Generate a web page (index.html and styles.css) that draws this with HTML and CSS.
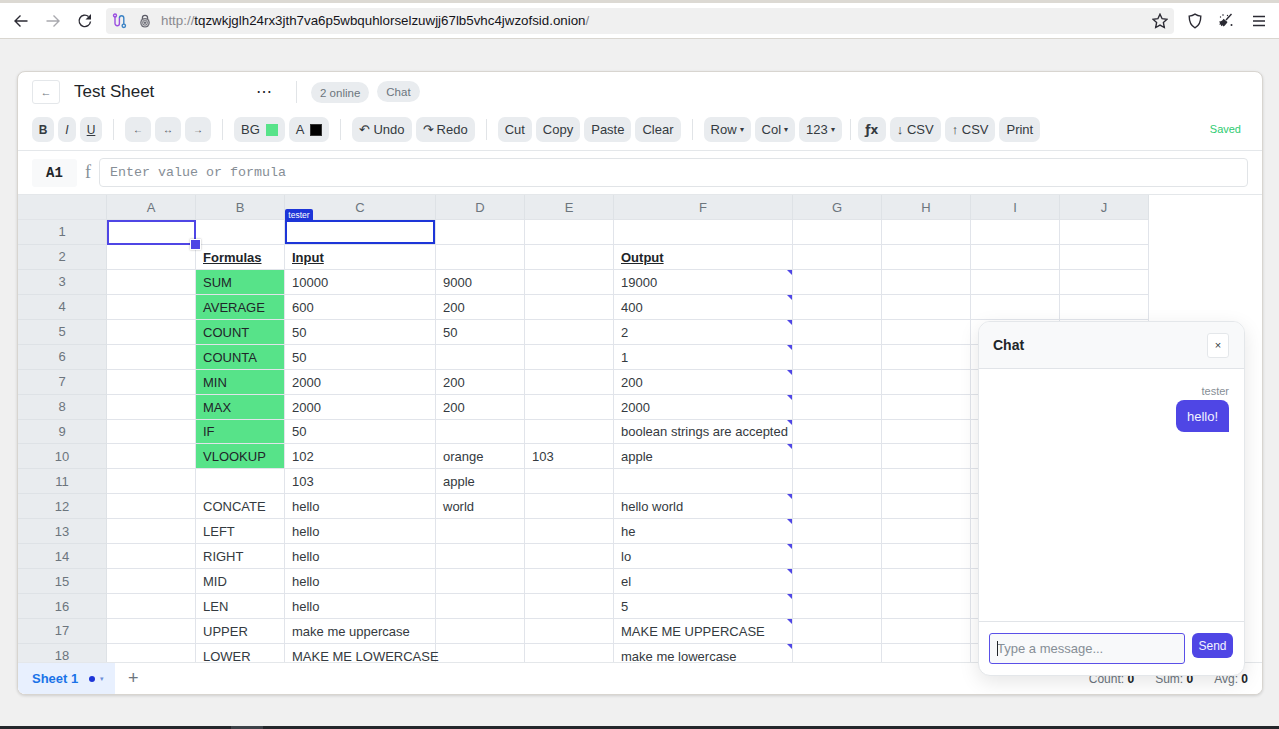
FILE: index.html
```html
<!DOCTYPE html>
<html lang="en">
<head>
<meta charset="utf-8">
<title>Test Sheet</title>
<link rel="stylesheet" href="styles.css">
</head>
<body>
<header class="browser">
  <svg class="bi bi-back" viewBox="0 0 16 16"><path d="M14.5 8H2M7.5 2.5 2 8l5.5 5.5"/></svg>
  <svg class="bi bi-fwd" viewBox="0 0 16 16"><path d="M1.500 8H14M8.500 2.500 14 8l-5.500 5.500"/></svg>
  <svg class="bi bi-reload" viewBox="0 0 16 16"><path d="M13.500 8.500A5.700 5.700 0 1 1 11.500 3.500"/><path class="fill" d="M14 1v5.500H8.500z"/></svg>
  <div class="urlbar">
    <svg class="ui-onion" viewBox="0 0 16 16"><path class="p1" d="M3 3v7.500a2.200 2.200 0 0 0 4.400 0V5"/><path class="p2" d="M7.400 5a2.200 2.200 0 0 1 4.400 0v6"/><circle class="p1" cx="3" cy="2.500" r="1.500"/><circle class="p2" cx="11.800" cy="12.800" r="1.700"/></svg>
    <svg class="ui-lock" viewBox="0 0 16 16"><path class="shackle" d="M5 6V4.500a3 3 0 0 1 6 0V6"/><circle class="body" cx="8" cy="10" r="5.500"/><circle class="ring" cx="8" cy="10" r="3.700"/><circle class="ring" cx="8" cy="10" r="1.900"/></svg>
    <div class="url"><span class="dim">http://</span>tqzwkjglh24rx3jth7va6p5wbquhlorselzuwjj67lb5vhc4jwzofsid.onion<span class="dim">/</span></div>
    <svg class="bi bi-star" viewBox="0 0 16 16"><path d="M8 1.200 10.100 5.700 15 6.300 11.400 9.600 12.300 14.500 8 12.100 3.700 14.500 4.600 9.600 1 6.300 5.900 5.700z"/></svg>
  </div>
  <svg class="bi bi-shield" viewBox="0 0 16 16"><path d="M8 1.200c2 1.300 3.700 1.800 5.800 1.900 0 6-1.500 9.700-5.800 11.700C3.700 12.800 2.200 9.100 2.200 3.100 4.300 3 6 2.500 8 1.200z"/></svg>
  <svg class="bi bi-broom" viewBox="0 0 16 16"><path class="fill" d="M1 8.500c2 .2 3.500-1 4.500-2.800L9.500 9c-1 1.500-2 3.300-4 4.500l-1-1.300-1.200 1-.6-1.700-1.400.3.700-1.800L1 8.500z"/><path d="M8 7 13.500 1"/><circle class="fill" cx="5" cy="2" r=".8"/><circle class="fill" cx="2.500" cy="4" r=".7"/><circle class="fill" cx="13.500" cy="12" r="1"/><circle class="fill" cx="9.500" cy="2.500" r=".7"/></svg>
  <svg class="bi bi-menu" viewBox="0 0 16 16"><path d="M2 3.500h12M2 8h12M2 12.500h12"/></svg>
</header>

<main class="page">
  <section class="card">
    <div class="titlebar">
      <button class="btn-back">←</button>
      <h1 class="doc-title">Test Sheet</h1>
      <span class="doc-more">⋯</span>
      <span class="vsep title-sep"></span>
      <span class="pill pill-online">2 online</span>
      <span class="pill pill-chat">Chat</span>
    </div>
    <div class="toolbar">
      <button class="tb tb-b">B</button><button class="tb tb-i">I</button><button class="tb tb-u">U</button>
      <span class="vsep"></span>
      <button class="tb tb-al">←</button><button class="tb tb-al">↔</button><button class="tb tb-al">→</button>
      <span class="vsep"></span>
      <button class="tb tb-bg">BG <i class="swatch sw-green"></i></button><button class="tb tb-fg">A <i class="swatch sw-black"></i></button>
      <span class="vsep"></span>
      <button class="tb"><span class="sym">↶</span> Undo</button><button class="tb"><span class="sym">↷</span> Redo</button>
      <span class="vsep"></span>
      <button class="tb">Cut</button><button class="tb">Copy</button><button class="tb">Paste</button><button class="tb">Clear</button>
      <span class="vsep"></span>
      <button class="tb">Row <span class="caret">▾</span></button><button class="tb">Col <span class="caret">▾</span></button><button class="tb">123 <span class="caret">▾</span></button>
      <span class="vsep vsep-tight"></span>
      <button class="tb tb-fx">ƒx</button><button class="tb">↓ CSV</button><button class="tb">↑ CSV</button><button class="tb">Print</button>
      <span class="saved">Saved</span>
    </div>
    <div class="formula">
      <div class="cellref">A1</div>
      <span class="fx-mark">f</span>
      <input class="formula-input" placeholder="Enter value or formula">
    </div>
    <div class="grid-wrap">
      <div class="grid">
        <div class="h"></div><div class="h">A</div><div class="h">B</div><div class="h">C</div><div class="h">D</div><div class="h">E</div><div class="h">F</div><div class="h">G</div><div class="h">H</div><div class="h">I</div><div class="h">J</div>

        <div class="r">1</div><div class="c sel-wrap"><span class="sel"></span><span class="handle"></span></div><div class="c"></div><div class="c sel-wrap"><span class="remote"></span><span class="remote-tag">tester</span></div><div class="c"></div><div class="c"></div><div class="c"></div><div class="c"></div><div class="c"></div><div class="c"></div><div class="c"></div>

        <div class="r">2</div><div class="c"></div><div class="c hd">Formulas</div><div class="c hd">Input</div><div class="c"></div><div class="c"></div><div class="c hd">Output</div><div class="c"></div><div class="c"></div><div class="c"></div><div class="c"></div>

        <div class="r">3</div><div class="c"></div><div class="c g">SUM</div><div class="c">10000</div><div class="c">9000</div><div class="c"></div><div class="c n">19000</div><div class="c"></div><div class="c"></div><div class="c"></div><div class="c"></div>

        <div class="r">4</div><div class="c"></div><div class="c g">AVERAGE</div><div class="c">600</div><div class="c">200</div><div class="c"></div><div class="c n">400</div><div class="c"></div><div class="c"></div><div class="c"></div><div class="c"></div>

        <div class="r">5</div><div class="c"></div><div class="c g">COUNT</div><div class="c">50</div><div class="c">50</div><div class="c"></div><div class="c n">2</div><div class="c"></div><div class="c"></div><div class="c"></div><div class="c"></div>

        <div class="r">6</div><div class="c"></div><div class="c g">COUNTA</div><div class="c">50</div><div class="c"></div><div class="c"></div><div class="c n">1</div><div class="c"></div><div class="c"></div><div class="c"></div><div class="c"></div>

        <div class="r">7</div><div class="c"></div><div class="c g">MIN</div><div class="c">2000</div><div class="c">200</div><div class="c"></div><div class="c n">200</div><div class="c"></div><div class="c"></div><div class="c"></div><div class="c"></div>

        <div class="r">8</div><div class="c"></div><div class="c g">MAX</div><div class="c">2000</div><div class="c">200</div><div class="c"></div><div class="c n">2000</div><div class="c"></div><div class="c"></div><div class="c"></div><div class="c"></div>

        <div class="r">9</div><div class="c"></div><div class="c g">IF</div><div class="c">50</div><div class="c"></div><div class="c"></div><div class="c n">boolean strings are accepted</div><div class="c"></div><div class="c"></div><div class="c"></div><div class="c"></div>

        <div class="r">10</div><div class="c"></div><div class="c g">VLOOKUP</div><div class="c">102</div><div class="c">orange</div><div class="c">103</div><div class="c n">apple</div><div class="c"></div><div class="c"></div><div class="c"></div><div class="c"></div>

        <div class="r">11</div><div class="c"></div><div class="c"></div><div class="c">103</div><div class="c">apple</div><div class="c"></div><div class="c"></div><div class="c"></div><div class="c"></div><div class="c"></div><div class="c"></div>

        <div class="r">12</div><div class="c"></div><div class="c">CONCATE</div><div class="c">hello</div><div class="c">world</div><div class="c"></div><div class="c n">hello world</div><div class="c"></div><div class="c"></div><div class="c"></div><div class="c"></div>

        <div class="r">13</div><div class="c"></div><div class="c">LEFT</div><div class="c">hello</div><div class="c"></div><div class="c"></div><div class="c n">he</div><div class="c"></div><div class="c"></div><div class="c"></div><div class="c"></div>

        <div class="r">14</div><div class="c"></div><div class="c">RIGHT</div><div class="c">hello</div><div class="c"></div><div class="c"></div><div class="c n">lo</div><div class="c"></div><div class="c"></div><div class="c"></div><div class="c"></div>

        <div class="r">15</div><div class="c"></div><div class="c">MID</div><div class="c">hello</div><div class="c"></div><div class="c"></div><div class="c n">el</div><div class="c"></div><div class="c"></div><div class="c"></div><div class="c"></div>

        <div class="r">16</div><div class="c"></div><div class="c">LEN</div><div class="c">hello</div><div class="c"></div><div class="c"></div><div class="c n">5</div><div class="c"></div><div class="c"></div><div class="c"></div><div class="c"></div>

        <div class="r">17</div><div class="c"></div><div class="c">UPPER</div><div class="c">make me uppercase</div><div class="c"></div><div class="c"></div><div class="c n">MAKE ME UPPERCASE</div><div class="c"></div><div class="c"></div><div class="c"></div><div class="c"></div>

        <div class="r">18</div><div class="c"></div><div class="c">LOWER</div><div class="c">MAKE ME LOWERCASE</div><div class="c"></div><div class="c"></div><div class="c n">make me lowercase</div><div class="c"></div><div class="c"></div><div class="c"></div><div class="c"></div>
      </div>
    </div>
    <div class="tabs">
      <div class="tab">Sheet 1 <i class="tab-dot"></i><span class="tab-caret">▾</span></div>
      <span class="tab-add">+</span>
      <div class="stats">
        <span>Count: <b>0</b></span><span>Sum: <b>0</b></span><span>Avg: <b>0</b></span>
      </div>
    </div>

    <aside class="chat">
      <div class="chat-head"><strong>Chat</strong><button class="chat-close">×</button></div>
      <div class="chat-body">
        <div class="chat-name">tester</div>
        <div class="bubble">hello!</div>
      </div>
      <div class="chat-foot">
        <div class="chat-input-wrap"><span class="chat-caret"></span><input class="chat-input" placeholder="Type a message..."></div>
        <button class="chat-send">Send</button>
      </div>
    </aside>
  </section>
</main>
<div class="taskbar"><span class="task-item"></span></div>
</body>
</html>
```
FILE: styles.css
```css
* { box-sizing: border-box; }
html, body { margin: 0; height: 100%; overflow: hidden; }
body {
  background: #f0f0f0;
  font-family: "Liberation Sans", Arial, sans-serif;
  color: #212529;
  display: flex;
  flex-direction: column;
  height: 729px;
}
button { font-family: inherit; border: 0; margin: 0; }

/* browser chrome */
.browser {
  height: 39px;
  flex: none;
  background: #fff;
  border-top: 3px solid #dcd9d3;
  border-bottom: 1px solid #d9d6d0;
  display: flex;
  align-items: center;
  padding-left: 13px;
}
.bi { width: 16px; height: 16px; flex: none; fill: none; stroke: #2b2a33; stroke-width: 1.4; }
.bi .fill { fill: #2b2a33; stroke: none; }
.bi-fwd { margin-left: 16px; stroke: #a9a9ae; }
.bi-reload { margin-left: 16px; }
.urlbar {
  margin-left: 13px;
  width: 1068px;
  height: 26px;
  background: #f0f0f0;
  border-radius: 4px;
  display: flex;
  align-items: center;
  padding-left: 6px;
}
.ui-onion { width: 16px; height: 16px; flex: none; fill: none; stroke-width: 1.4; }
.ui-onion .p1 { stroke: #9a4fe0; }
.ui-onion .p2 { stroke: #3b82c4; }
.ui-lock { width: 14px; height: 16px; margin-left: 10px; flex: none; fill: none; }
.ui-lock .shackle { stroke: #5b5b66; stroke-width: 1.4; }
.ui-lock .body { fill: #6f6f78; }
.ui-lock .ring { stroke: #e8e8e8; stroke-width: .8; }
.url { margin-left: 9px; font-size: 13.33px; color: #15141a; white-space: nowrap; }
.url .dim { color: #8a8a8f; }
.bi-star { margin-left: auto; margin-right: 6px; }
.bi-shield { margin-left: 13px; }
.bi-broom { margin-left: 15px; }
.bi-menu { margin-left: 17px; }

/* page */
.page { flex: 1; padding: 32px 16px 0 17px; min-height: 0; }
.card {
  position: relative;
  width: 1246px;
  height: 624px;
  background: #fff;
  border: 1px solid #d8d5d0;
  border-radius: 8px;
  box-shadow: 0 1px 3px rgba(0,0,0,.14);
  display: flex;
  flex-direction: column;
  overflow: hidden;
}
.titlebar {
  height: 39px;
  flex: none;
  display: flex;
  align-items: center;
  padding-left: 14px;
  padding-top: 0;
}
.btn-back {
  width: 28px;
  height: 24px;
  background: #fff;
  border: 1px solid #e4e7ea;
  border-radius: 3px;
  color: #6c757d;
  font-size: 11px;
  padding: 0;
}
.doc-title { font-size: 17px; font-weight: 400; margin: 0 0 0 14px; color: #212529; width: 182px; }
.doc-more { font-size: 16px; color: #212529; width: 40px; }
.vsep { width: 1px; height: 22px; background: #e1e4e7; flex: none; margin: 0 10px 0 7px; }
.title-sep { margin: 0 14px 0 0; }
.pill {
  background: #e9ecef;
  color: #6c757d;
  font-size: 11.5px;
  border-radius: 11px;
  height: 21px;
  display: flex;
  align-items: center;
  padding: 0 9px;
}
.pill-online { margin-right: 8px; margin-top: 2px; }

.toolbar {
  height: 40px;
  flex: none;
  display: flex;
  align-items: flex-start;
  gap: 4px;
  padding: 6px 21px 0 14px;
  border-bottom: 1px solid #e4e7ea;
}
.toolbar .vsep { margin: 2px 7px 0; height: 21px; }
.toolbar .vsep-tight { margin: 2px 3px 0 4px; }
.tb {
  height: 25px;
  background: #e9ecef;
  color: #343a40;
  font-size: 13px;
  border-radius: 7px;
  padding: 0 7px;
  display: flex;
  align-items: center;
  gap: 3px;
  white-space: nowrap;
}
.tb-b { font-weight: 700; width: 22px; justify-content: center; padding: 0; font-size: 12px; }
.tb-i { font-style: italic; width: 18px; justify-content: center; padding: 0; font-size: 12px; }
.tb-u { text-decoration: underline; width: 22px; justify-content: center; padding: 0; font-size: 12px; }
.tb-al { width: 26px; justify-content: center; padding: 0; font-size: 10px; color: #495057; }
.tb-bg, .tb-fg { gap: 6px; }
.sym { font-size: 13px; }
.caret { font-size: 8px; }
.swatch { width: 12px; height: 12px; display: block; }
.sw-green { background: #57e389; }
.sw-black { background: #000; border: 1px solid #333; }
.tb-fx { font-weight: 700; font-family: "DejaVu Sans", sans-serif; font-size: 12px; width: 28px; justify-content: center; padding: 0; }
.saved { margin-left: auto; color: #2ecc71; font-size: 11px; margin-top: 6px; }

.formula {
  height: 44px;
  flex: none;
  display: flex;
  align-items: center;
  padding: 0 14px;
  border-bottom: 1px solid #e4e7ea;
}
.cellref {
  width: 45px;
  height: 28px;
  background: #f8f9fa;
  border-radius: 3px;
  display: flex;
  align-items: center;
  justify-content: center;
  font-family: "Liberation Mono", monospace;
  font-weight: 700;
  font-size: 14px;
  color: #212529;
}
.fx-mark { width: 22px; text-align: center; font-family: "Liberation Serif", serif; font-size: 18px; color: #868e96; }
.formula-input {
  flex: 1;
  min-width: 0;
  height: 29px;
  border: 1px solid #e1e4e7;
  border-radius: 4px;
  padding: 0 10px;
  font-family: "Liberation Mono", monospace;
  font-size: 13.33px;
  background: #fff;
}
.formula-input::placeholder { color: #868e96; opacity: 1; }

/* grid */
.grid-wrap { flex: 1; min-height: 0; overflow: hidden; }
.grid {
  display: grid;
  grid-template-columns: 89px 89px 89px 151px 89px 89px 179px 89px 89px 89px 89px;
  grid-template-rows: 25px;
  grid-auto-rows: 24.94px;
  width: 1131px;
}
.h, .r {
  background: #e9ecef;
  color: #6c757d;
  font-size: 13px;
  display: flex;
  align-items: center;
  justify-content: center;
  border-right: 1px solid #dee2e6;
  border-bottom: 1px solid #dee2e6;
}
.h { border-bottom-color: #e1e4e8; }
.c {
  position: relative;
  border-right: 1px solid #e1e4ea;
  border-bottom: 1px solid #e1e4ea;
  font-size: 13px;
  color: #343a40;
  padding: 1px 7px 0;
  display: flex;
  align-items: center;
  white-space: nowrap;
}
.hd { font-weight: 700; text-decoration: underline; color: #212529; }
.g { background: #57e389; color: #212529; }
.n::after {
  content: "";
  position: absolute;
  top: 0;
  right: 0;
  border-style: solid;
  border-width: 0 5px 5px 0;
  border-color: transparent #4f46e5 transparent transparent;
}
.sel { position: absolute; inset: 0 -1px -1px 0; border: 2px solid #4f46e5; pointer-events: none; }
.handle {
  position: absolute;
  right: -6px;
  bottom: -6px;
  width: 11px;
  height: 11px;
  background: #4f46e5;
  border: 1.5px solid #fff;
  box-shadow: 0 0 2px rgba(0,0,0,.3);
  z-index: 3;
}
.remote { position: absolute; inset: 0; border: 2px solid #1d35d8; pointer-events: none; }
.remote-tag {
  position: absolute;
  left: 0;
  top: -11px;
  height: 11px;
  width: 28px;
  background: #1d35d8;
  color: #fff;
  font-size: 8.5px;
  line-height: 12px;
  text-align: center;
  border-radius: 2px 2px 0 0;
  z-index: 2;
}

/* tabs */
.tabs {
  height: 32px;
  flex: none;
  display: flex;
  align-items: center;
  border-top: 1px solid #e4e7ea;
  background: #fff;
}
.tab {
  width: 97px;
  align-self: stretch;
  background: #e8f0fe;
  color: #1a73e8;
  font-size: 13px;
  font-weight: 700;
  display: flex;
  align-items: center;
  padding-left: 14px;
  white-space: pre;
}
.tab-dot { width: 6px; height: 6px; border-radius: 50%; background: #1d35d8; margin-left: 7px; }
.tab-caret { font-size: 7px; margin-left: 5px; color: #6c8ed8; font-weight: 400; }
.tab-add { margin-left: 13px; font-size: 18px; color: #6c757d; }
.stats { margin-left: auto; padding-right: 14px; display: flex; gap: 21px; font-size: 12px; color: #6c757d; }
.stats b { color: #212529; }

/* chat */
.chat {
  position: absolute;
  right: 17px;
  bottom: 18px;
  width: 267px;
  height: 355px;
  background: #fff;
  border: 1px solid #e4e7ea;
  border-radius: 12px;
  box-shadow: 0 6px 20px rgba(0,0,0,.1);
  display: flex;
  flex-direction: column;
  overflow: hidden;
  z-index: 5;
}
.chat-head {
  height: 47px;
  flex: none;
  background: #f8f9fa;
  border-bottom: 1px solid #e1e4e8;
  display: flex;
  align-items: center;
  justify-content: space-between;
  padding: 0 15px 0 14px;
}
.chat-head strong { font-size: 14px; color: #212529; }
.chat-close {
  width: 22px;
  height: 25px;
  background: #fff;
  border: 1px solid #e4e7ea;
  border-radius: 3px;
  color: #343a40;
  font-size: 11px;
  padding: 0;
}
.chat-body {
  flex: 1;
  padding: 16px 15px 0;
  display: flex;
  flex-direction: column;
  align-items: flex-end;
}
.chat-name { font-size: 11px; color: #868e96; margin-bottom: 3px; }
.bubble {
  height: 32px;
  background: #4f46e5;
  color: #f3f3ff;
  font-size: 13px;
  display: flex;
  align-items: center;
  padding: 0 11px;
  border-radius: 8px 8px 0 8px;
}
.chat-foot {
  height: 54px;
  flex: none;
  border-top: 1px solid #e1e4e8;
  display: flex;
  align-items: flex-start;
  padding: 11px 11px 0 10px;
  gap: 7px;
}
.chat-input-wrap { position: relative; flex: 1; }
.chat-caret { position: absolute; left: 8px; top: 8px; width: 1px; height: 15px; background: #212529; }
.chat-input {
  width: 196px;
  height: 31px;
  border: 1px solid #5a50e8;
  border-radius: 3px;
  background: #f8f9fa;
  padding: 0 7px;
  font-family: inherit;
  font-size: 13px;
  outline: none;
}
.chat-input::placeholder { color: #868e96; opacity: 1; }
.chat-send {
  width: 41px;
  height: 25px;
  background: #4f46e5;
  color: #f3f3ff;
  font-size: 12px;
  border-radius: 6px;
  padding: 0;
}

.taskbar { height: 3px; flex: none; background: #24272b; padding-left: 231px; }
.task-item { display: block; width: 32px; height: 3px; background: #3d4248; }
```
